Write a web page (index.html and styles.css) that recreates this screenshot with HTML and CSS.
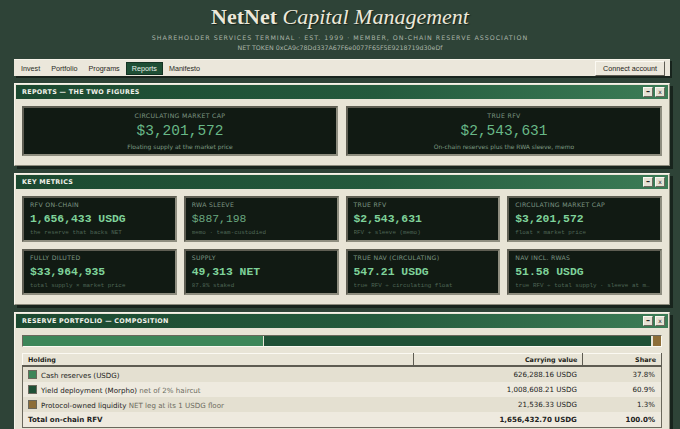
FILE: index.html
```html
<!DOCTYPE html>
<html>
<head>
	<title>NetNet Capital Management</title>
	<link rel="stylesheet" href="styles.css">
</head>
<body>

<div class="masthead">
	<div class="brand"><b>NetNet</b> <i>Capital Management</i></div>
	<div class="tagline">SHAREHOLDER SERVICES TERMINAL · EST. 1999 · MEMBER, ON-CHAIN RESERVE ASSOCIATION</div>
	<div class="token">NET TOKEN 0xCA9c78Dd337A67F6e0077F65F5E9218719d30eDf</div>
</div>

<div class="page">

	<!-- top menu -->
	<div class="menubar">
		<span class="menu_item">Invest</span>
		<span class="menu_item">Portfolio</span>
		<span class="menu_item">Programs</span>
		<span class="menu_item active">Reports</span>
		<span class="menu_item">Manifesto</span>
		<span class="connect">Connect account</span>
	</div>

	<!-- the two headline figures -->
	<div class="window">
		<div class="titlebar">
			<span class="title">REPORTS — THE TWO FIGURES</span>
			<span class="winbtn">&#8211;</span><span class="winbtn small">x</span>
		</div>
		<div class="window_body figures">
			<div class="figure">
				<div class="fig_label">CIRCULATING MARKET CAP</div>
				<div class="fig_value">$3,201,572</div>
				<div class="fig_note">Floating supply at the market price</div>
			</div>
			<div class="figure">
				<div class="fig_label">TRUE RFV</div>
				<div class="fig_value">$2,543,631</div>
				<div class="fig_note">On-chain reserves plus the RWA sleeve, memo</div>
			</div>
		</div>
	</div>

	<!-- metric tiles -->
	<div class="window">
		<div class="titlebar">
			<span class="title">KEY METRICS</span>
			<span class="winbtn">&#8211;</span><span class="winbtn small">x</span>
		</div>
		<div class="window_body metrics">
			<div class="metric">
				<div class="m_label">RFV ON-CHAIN</div>
				<div class="m_value">1,656,433 USDG</div>
				<div class="m_note">the reserve that backs NET</div>
			</div>
			<div class="metric">
				<div class="m_label">RWA SLEEVE</div>
				<div class="m_value dim">$887,198</div>
				<div class="m_note">memo · team-custodied</div>
			</div>
			<div class="metric">
				<div class="m_label">TRUE RFV</div>
				<div class="m_value">$2,543,631</div>
				<div class="m_note">RFV + sleeve (memo)</div>
			</div>
			<div class="metric">
				<div class="m_label">CIRCULATING MARKET CAP</div>
				<div class="m_value">$3,201,572</div>
				<div class="m_note">float × market price</div>
			</div>
			<div class="metric">
				<div class="m_label">FULLY DILUTED</div>
				<div class="m_value">$33,964,935</div>
				<div class="m_note">total supply × market price</div>
			</div>
			<div class="metric">
				<div class="m_label">SUPPLY</div>
				<div class="m_value">49,313 NET</div>
				<div class="m_note">87.8% staked</div>
			</div>
			<div class="metric">
				<div class="m_label">TRUE NAV (CIRCULATING)</div>
				<div class="m_value">547.21 USDG</div>
				<div class="m_note">true RFV ÷ circulating float</div>
			</div>
			<div class="metric">
				<div class="m_label">NAV INCL. RWAS</div>
				<div class="m_value">51.58 USDG</div>
				<div class="m_note">true RFV ÷ total supply · sleeve at m…</div>
			</div>
		</div>
	</div>

	<!-- reserve breakdown -->
	<div class="window">
		<div class="titlebar">
			<span class="title">RESERVE PORTFOLIO — COMPOSITION</span>
			<span class="winbtn">&#8211;</span><span class="winbtn small">x</span>
		</div>
		<div class="window_body">
			<div class="stackbar">
				<div class="seg cash" style="width:37.8%"></div>
				<div class="seg yield" style="width:60.9%"></div>
				<div class="seg pol" style="width:1.3%"></div>
			</div>
			<table class="holdings">
				<tr>
					<th>Holding</th>
					<th class="num">Carrying value</th>
					<th class="num">Share</th>
				</tr>
				<tr>
					<td><span class="swatch cash"></span>Cash reserves (USDG)</td>
					<td class="num">626,288.16 USDG</td>
					<td class="num">37.8%</td>
				</tr>
				<tr class="alt">
					<td><span class="swatch yield"></span>Yield deployment (Morpho) <span class="aside">net of 2% haircut</span></td>
					<td class="num">1,008,608.21 USDG</td>
					<td class="num">60.9%</td>
				</tr>
				<tr>
					<td><span class="swatch pol"></span>Protocol-owned liquidity <span class="aside">NET leg at its 1 USDG floor</span></td>
					<td class="num">21,536.33 USDG</td>
					<td class="num">1.3%</td>
				</tr>
				<tr class="total">
					<td>Total on-chain RFV</td>
					<td class="num">1,656,432.70 USDG</td>
					<td class="num">100.0%</td>
				</tr>
			</table>
		</div>
	</div>

</div>

</body>
</html>
```

FILE: styles.css
```css
body
{
	margin: 0;
	background-color: #2e4337;
	font-family: "Liberation Sans", Arial, sans-serif;
	color: #1d1d18;
}

/* masthead */
.masthead
{
	text-align: center;
	padding-top: 4px;
	height: 55px;
}
.brand
{
	font-family: "Liberation Serif", "Times New Roman", serif;
	font-size: 22px;
	line-height: 25px;
	color: #ece8da;
	text-shadow: 1px 1px 1px #17241c;
}
.brand i
{
	font-weight: normal;
}
.tagline
{
	font-family: "DejaVu Sans", sans-serif;
	font-size: 6.3px;
	letter-spacing: 1px;
	color: #aab4a8;
	margin-top: 5px;
}
.token
{
	font-family: "DejaVu Sans", sans-serif;
	font-size: 6.3px;
	color: #aab4a8;
	margin-top: 3px;
}

.page
{
	margin-left: 14px;
	width: 656px;
}

/* menu bar */
.menubar
{
	display: flex;
	align-items: center;
	height: 16px;
	background-color: #ebe7db;
	border-top: 1px solid #f7f4ea;
	box-shadow: 2px 2px 0px 0px #18241d;
	padding-left: 2px;
	font-size: 7.2px;
}
.menu_item
{
	padding: 2px 5px;
	color: #2a2a24;
	margin-right: 1px;
}
.menu_item.active
{
	background-color: #1f4f35;
	color: #e8efe8;
	border: 1px solid #143323;
	padding: 1px 5px;
}
.connect
{
	margin-left: auto;
	margin-right: 5px;
	background-color: #ebe7db;
	border: 1px solid;
	border-color: #fbf9f2 #5e5c52 #5e5c52 #fbf9f2;
	padding: 2px 7px;
	font-size: 7.2px;
	line-height: 9px;
}

/* windows */
.window
{
	margin-top: 7px;
	background-color: #e8e4d6;
	border: 1px solid;
	border-color: #f6f3ea #8c8a7c #8c8a7c #f6f3ea;
	padding: 1px;
	box-shadow: 3px 3px 0px 0px #18241d;
}
.titlebar
{
	display: flex;
	align-items: center;
	height: 14px;
	padding: 0px 3px 0px 6px;
	background: linear-gradient(to right, #1c4930, #245a3d 55%, #3c7c56);
}
.title
{
	flex: 1;
	font-family: "DejaVu Sans", sans-serif;
	font-weight: bold;
	font-size: 6.4px;
	letter-spacing: 0.3px;
	color: #f1f1ea;
}
.winbtn
{
	width: 8px;
	height: 8px;
	margin-left: 2px;
	background-color: #e6e2d4;
	border: 1px solid;
	border-color: #fbf9f2 #6a685c #6a685c #fbf9f2;
	font-family: "DejaVu Sans", sans-serif;
	font-weight: bold;
	font-size: 8px;
	line-height: 7px;
	text-align: center;
	color: #222;
}
.winbtn.small
{
	font-weight: normal;
	font-size: 6px;
	line-height: 8px;
}
.window_body
{
	padding: 7px 6px 8px 6px;
}

/* two figures */
.figures
{
	display: grid;
	grid-template-columns: 1fr 1fr;
	column-gap: 8px;
}
.figure
{
	background-color: #111a13;
	border: 2px solid;
	border-color: #5f5e53 #8e8d7f #8e8d7f #5f5e53;
	text-align: center;
	padding: 4px 0px 3px 0px;
}
.fig_label
{
	font-family: "DejaVu Sans", sans-serif;
	font-size: 6.2px;
	line-height: 8px;
	letter-spacing: 0.35px;
	color: #7d9683;
}
.fig_value
{
	font-family: "Liberation Mono", monospace;
	font-size: 14.5px;
	line-height: 18px;
	color: #68b887;
	margin-top: 2px;
}
.fig_note
{
	font-family: "DejaVu Sans", sans-serif;
	font-size: 6px;
	line-height: 8px;
	color: #7e9a84;
	margin-top: 3px;
}

/* metric tiles */
.metrics
{
	display: grid;
	grid-template-columns: repeat(4, 1fr);
	gap: 7px 7px;
}
.metric
{
	background-color: #111a13;
	border: 2px solid;
	border-color: #5f5e53 #8e8d7f #8e8d7f #5f5e53;
	padding: 3px 5px 3px 6px;
	white-space: nowrap;
	overflow: hidden;
}
.m_label
{
	font-family: "DejaVu Sans", sans-serif;
	font-size: 6.2px;
	line-height: 8px;
	letter-spacing: 0.3px;
	color: #7d9683;
}
.m_value
{
	font-family: "Liberation Mono", monospace;
	font-weight: bold;
	font-size: 11.4px;
	line-height: 14px;
	color: #7fd29a;
	margin-top: 3px;
}
.m_value.dim
{
	font-weight: normal;
	color: #6aa880;
}
.m_note
{
	font-family: "Liberation Mono", monospace;
	font-size: 5.9px;
	line-height: 8px;
	color: #4f6656;
	margin-top: 3px;
	overflow: hidden;
	text-overflow: ellipsis;
}

/* stacked composition bar */
.stackbar
{
	display: flex;
	height: 10px;
	border: 1px solid;
	border-color: #6a685c #fbf9f2 #fbf9f2 #6a685c;
	background-color: #1f5036;
}
.seg
{
	height: 100%;
}
.seg.cash
{
	background-color: #3d8659;
	border-right: 1px solid #e8e4d6;
}
.seg.yield
{
	background-color: #1f5036;
}
.seg.pol
{
	background-color: #8d6e38;
	border-left: 2px solid #e8e4d6;
}

/* holdings table */
.holdings
{
	width: 100%;
	margin-top: 6px;
	border-collapse: collapse;
	border: 1px solid #6a685c;
	font-family: "DejaVu Sans", sans-serif;
	font-size: 7.1px;
}
.holdings th
{
	text-align: left;
	font-size: 6.4px;
	font-weight: bold;
	height: 11px;
	padding: 0px 5px;
	background-color: #e8e4d6;
	border: 1px solid;
	border-color: #fbf9f2 #5e5c52 #5e5c52 #fbf9f2;
	border-bottom-width: 2px;
}
.holdings th:first-child
{
	width: 380px;
}
.holdings td
{
	height: 15px;
	padding: 0px 6px 0px 5px;
	background-color: #e4e0d1;
	color: #222;
}
.holdings tr.alt td
{
	background-color: #eeeadf;
}
.holdings tr.total td
{
	font-weight: bold;
	background-color: #eeeadf;
}
.holdings .num
{
	text-align: right;
}
.aside
{
	color: #6c6b60;
}
.swatch
{
	display: inline-block;
	width: 7px;
	height: 7px;
	margin-right: 4px;
	vertical-align: -1px;
	border: 1px solid #6a685c;
}
.swatch.cash
{
	background-color: #3d8659;
}
.swatch.yield
{
	background-color: #1f5036;
}
.swatch.pol
{
	background-color: #8d6e38;
}
```
